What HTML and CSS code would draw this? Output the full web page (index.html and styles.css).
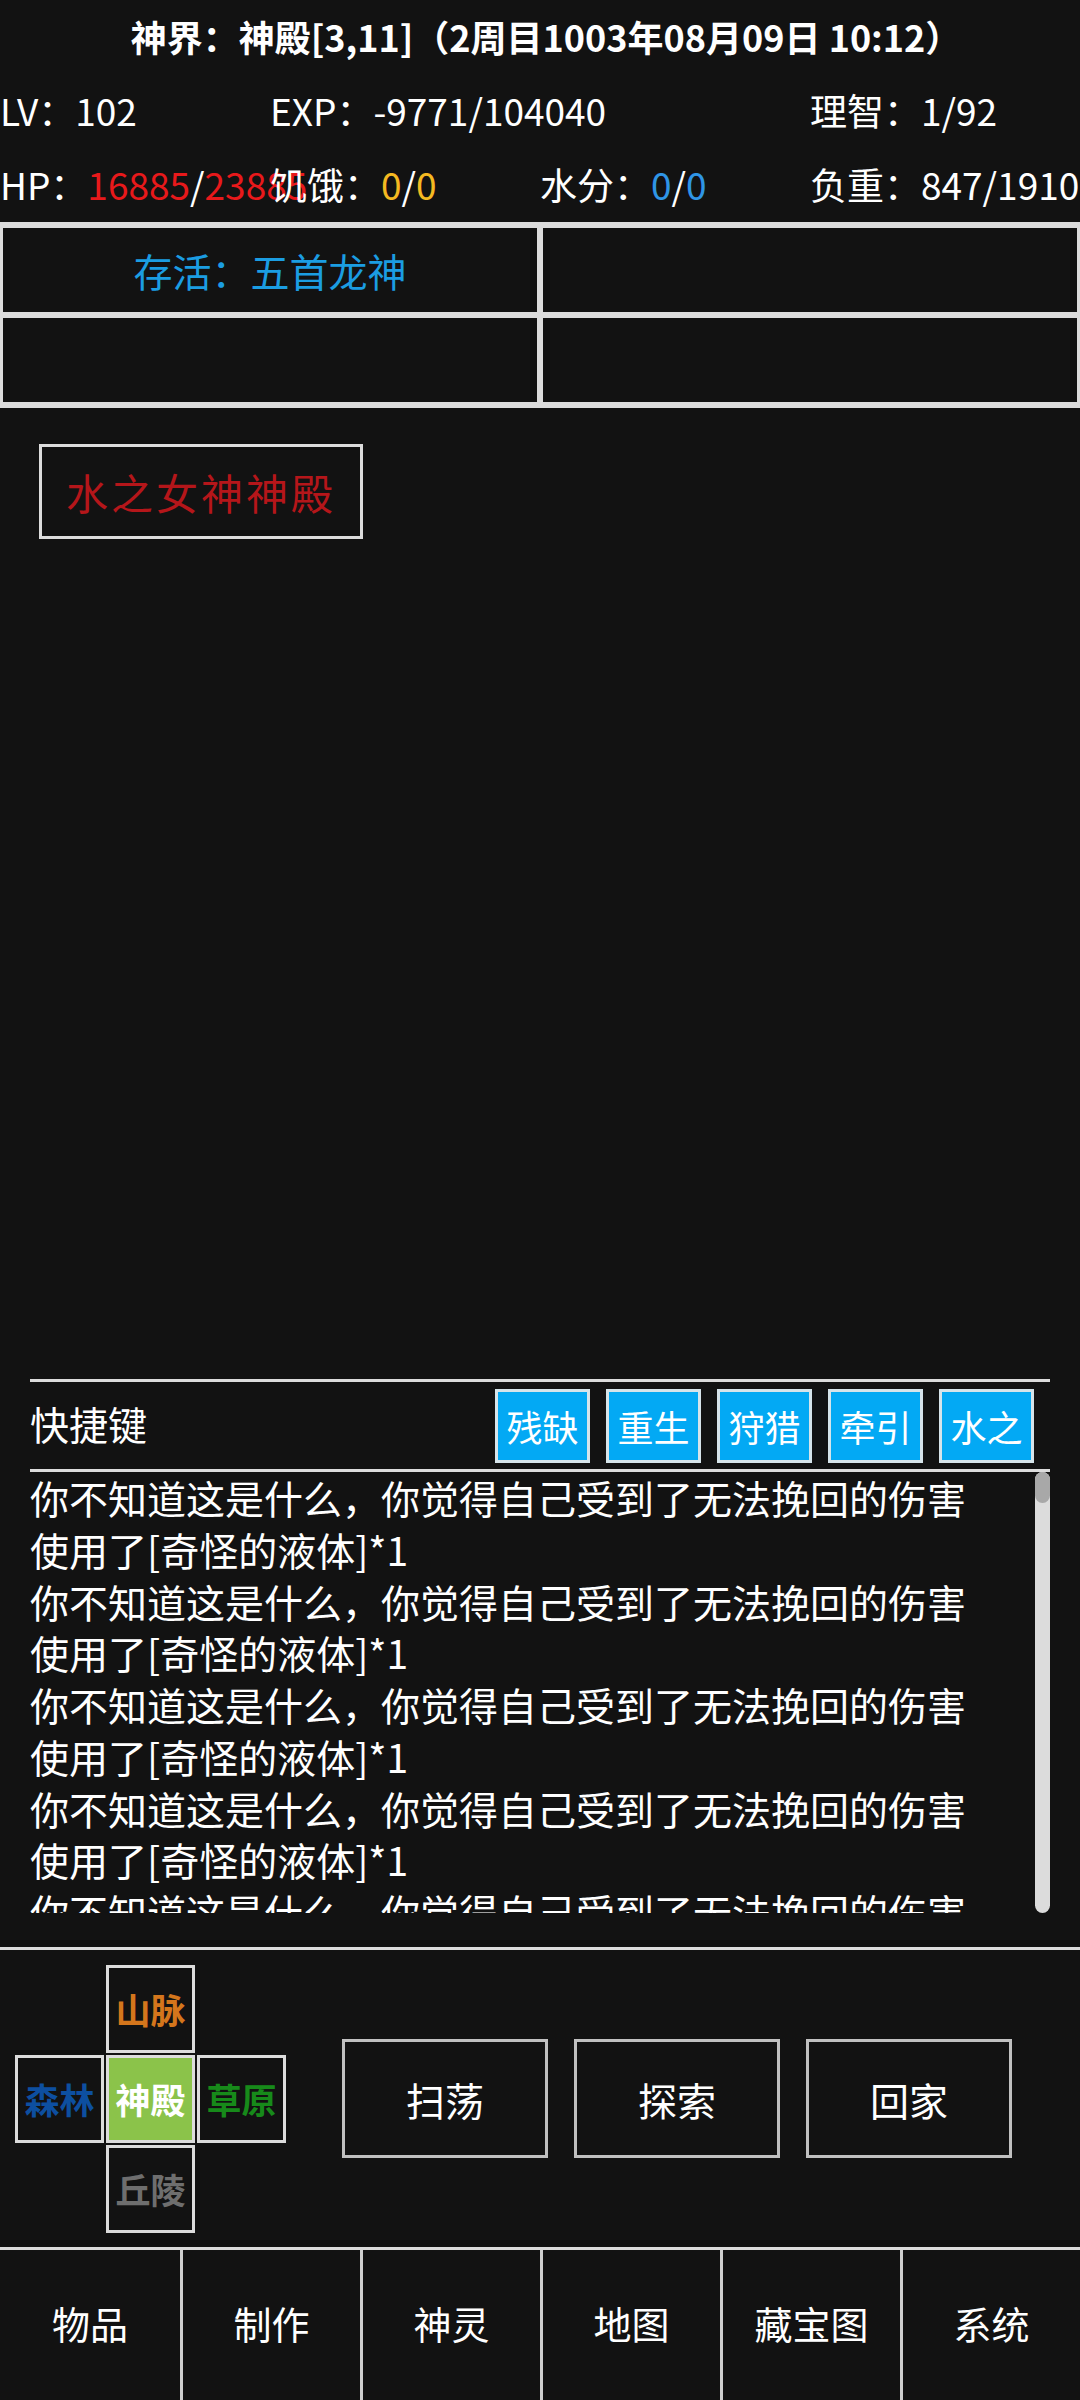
FILE: index.html
```
<!DOCTYPE html>
<html lang="zh-CN">
<head>
    <meta charset="UTF-8">
    <meta name="viewport" content="width=device-width, initial-scale=1.0">
    <title>神界</title>
    <link rel="stylesheet" href="styles.css">
</head>
<body>
    <div class="app">
        <header class="top">
            <h1 class="title">神界：神殿[3,11]（2周目1003年08月09日 10:12）</h1>
            <div class="stats">
                <div class="stat">LV：102</div>
                <div class="stat">EXP：-9771/104040</div>
                <div class="stat"></div>
                <div class="stat">理智：1/92</div>
                <div class="stat">HP：<span class="red">16885</span>/<span class="red">23885</span></div>
                <div class="stat">饥饿：<span class="yellow">0</span>/<span class="yellow">0</span></div>
                <div class="stat">水分：<span class="blue">0</span>/<span class="blue">0</span></div>
                <div class="stat">负重：847/1910</div>
            </div>
        </header>

        <div class="slots">
            <div class="slot"><span class="alive">存活：五首龙神</span></div>
            <div class="slot"></div>
            <div class="slot"></div>
            <div class="slot"></div>
        </div>

        <main class="scene">
            <button class="place">水之女神神殿</button>
        </main>

        <section class="panel">
            <div class="hotkeys">
                <span class="hotkeys-label">快捷键</span>
                <div class="hotkey-list">
                    <button class="hotkey">残缺</button>
                    <button class="hotkey">重生</button>
                    <button class="hotkey">狩猎</button>
                    <button class="hotkey">牵引</button>
                    <button class="hotkey">水之</button>
                </div>
            </div>
            <div class="log">
                <div class="log-lines">
                    <p>你不知道这是什么，你觉得自己受到了无法挽回的伤害</p>
                    <p>使用了[奇怪的液体]*1</p>
                    <p>你不知道这是什么，你觉得自己受到了无法挽回的伤害</p>
                    <p>使用了[奇怪的液体]*1</p>
                    <p>你不知道这是什么，你觉得自己受到了无法挽回的伤害</p>
                    <p>使用了[奇怪的液体]*1</p>
                    <p>你不知道这是什么，你觉得自己受到了无法挽回的伤害</p>
                    <p>使用了[奇怪的液体]*1</p>
                    <p>你不知道这是什么，你觉得自己受到了无法挽回的伤害</p>
                    <p>使用了[奇怪的液体]*1</p>
                </div>
                <div class="scrollbar"><div class="thumb"></div></div>
            </div>
        </section>

        <section class="controls">
            <div class="dpad">
                <span></span>
                <button class="cell mountain">山脉</button>
                <span></span>
                <button class="cell forest">森林</button>
                <button class="cell here">神殿</button>
                <button class="cell grass">草原</button>
                <span></span>
                <button class="cell hill">丘陵</button>
                <span></span>
            </div>
            <div class="actions">
                <button class="action">扫荡</button>
                <button class="action">探索</button>
                <button class="action">回家</button>
            </div>
        </section>

        <nav class="tabs">
            <button class="tab">物品</button>
            <button class="tab">制作</button>
            <button class="tab">神灵</button>
            <button class="tab">地图</button>
            <button class="tab">藏宝图</button>
            <button class="tab">系统</button>
        </nav>
    </div>
</body>
</html>
```
FILE: styles.css
```
* {
    box-sizing: border-box;
}
body {
    margin: 0;
    background: #121212;
    color: #fff;
    font-family: "Noto Sans CJK SC", "Noto Sans", sans-serif;
}
button {
    font-family: inherit;
    color: inherit;
    background: none;
    padding: 0;
    margin: 0;
    cursor: pointer;
}
.app {
    width: 1080px;
    height: 2400px;
    display: flex;
    flex-direction: column;
    overflow: hidden;
}
.title {
    margin: 0;
    height: 74px;
    line-height: 72px;
    padding-left: 12px;
    text-align: center;
    font-size: 36px;
    font-weight: 700;
}
.stats {
    display: grid;
    grid-template-columns: repeat(4, 270px);
    grid-auto-rows: 74px;
}
.stat {
    font-size: 37px;
    line-height: 70px;
    padding-top: 1px;
    white-space: nowrap;
}
.red { color: #e8191b; }
.yellow { color: #f5b921; }
.blue { color: #2f95e6; }

.slots {
    display: grid;
    grid-template-columns: 1fr 1fr;
    border-top: 3px solid #dcdcdc;
    border-bottom: 3px solid #dcdcdc;
}
.slot {
    height: 90px;
    border: 3px solid #dcdcdc;
    display: flex;
    align-items: center;
    justify-content: center;
}
.alive {
    color: #1b9de2;
    font-size: 39px;
}

.scene {
    flex: 1;
    padding: 36px 39px;
}
.place {
    width: 324px;
    height: 95px;
    border: 3px solid #dcdcdc;
    color: #b5161a;
    font-size: 42px;
    letter-spacing: 3px;
}

.panel {
    margin: 0 30px 34px;
    height: 534px;
    border-top: 3px solid #dcdcdc;
}
.hotkeys {
    height: 90px;
    border-bottom: 3px solid #dcdcdc;
    display: flex;
    align-items: center;
    justify-content: space-between;
}
.hotkeys-label {
    font-size: 39px;
    margin-top: -6px;
}
.hotkey-list {
    display: flex;
    gap: 16px;
    margin-right: 16px;
}
.hotkey {
    width: 95px;
    height: 74px;
    background: #03a9f4;
    border: 3px solid #d6e4ea;
    font-size: 36px;
}
.log {
    height: 441px;
    display: flex;
}
.log-lines {
    flex: 1;
    overflow: hidden;
}
.log-lines p {
    margin: 0;
    font-size: 39px;
    line-height: 51.75px;
    white-space: nowrap;
}
.scrollbar {
    width: 15px;
    background: #dcdcdc;
    border-radius: 8px;
}
.thumb {
    height: 31px;
    background: #a8a8a8;
    border-radius: 8px;
}

.controls {
    height: 300px;
    border-top: 3px solid #dcdcdc;
    display: flex;
    align-items: center;
    padding-left: 15px;
}
.dpad {
    display: grid;
    grid-template-columns: repeat(3, 89px);
    grid-template-rows: repeat(3, 88px);
    gap: 2px;
}
.cell {
    border: 3px solid #dcdcdc;
    font-size: 35px;
    font-weight: 700;
}
.mountain { color: #d4761c; }
.forest { color: #0d4fa0; }
.grass { color: #178a1a; }
.hill { color: #6e6e6e; }
.here {
    background: #8bc34a;
    color: #fff;
}
.actions {
    display: flex;
    gap: 26px;
    margin-left: 56px;
}
.action {
    width: 206px;
    height: 119px;
    border: 3px solid #c0c0c0;
    font-size: 39px;
}

.tabs {
    height: 153px;
    border-top: 3px solid #dcdcdc;
    display: grid;
    grid-template-columns: repeat(6, 1fr);
}
.tab {
    border: none;
    border-left: 3px solid #cfcfcf;
    padding-bottom: 6px;
    font-size: 38px;
}
.tab:first-child {
    border-left: none;
}
```
